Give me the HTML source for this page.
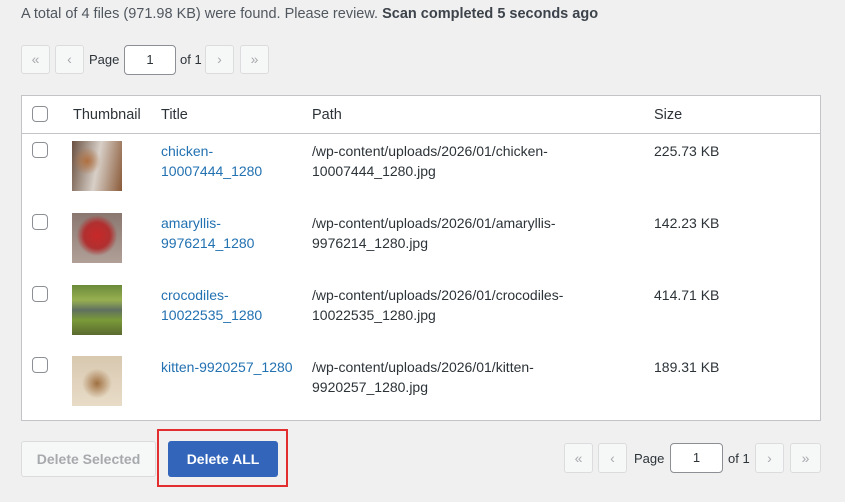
<!DOCTYPE html>
<html><head><style>
*{box-sizing:border-box;margin:0;padding:0}
body{width:845px;height:502px;background:#f0f0f1;font-family:"Liberation Sans",sans-serif;font-size:13px;color:#3c434a;position:relative;overflow:hidden}
.a{position:absolute}
.pb{position:absolute;width:29px;height:29px;border:1px solid #dcdcde;border-radius:3px;background:#f6f7f7;color:#a7aaad;text-align:center;line-height:26px;font-size:14px}
.inp{position:absolute;height:30px;border:1px solid #8c8f94;border-radius:4px;background:#fff;text-align:center;line-height:28px;font-size:13px;color:#2c3338}
.cb{position:absolute;left:32px;width:16px;height:16px;border:1px solid #8c8f94;border-radius:4px;background:#fff}
.th{position:absolute;left:72px;width:50px;height:50px}
.lk{color:#2271b1;line-height:20px;font-size:14px}
.tx{line-height:20px;color:#2c3338;font-size:14px}
</style></head><body>
<div class="a" style="left:21px;top:6px;color:#50575e;font-size:14.5px">A total of 4 files (971.98 KB) were found. Please review. <b style="color:#3c434a">Scan completed 5 seconds ago</b></div>
<div class="pb" style="left:21px;top:45px">«</div>
<div class="pb" style="left:55px;top:45px">‹</div>
<div class="a" style="left:89px;top:52px;color:#2c3338">Page</div>
<div class="inp" style="left:124px;top:45px;width:52px">1</div>
<div class="a" style="left:180px;top:52px;color:#2c3338">of 1</div>
<div class="pb" style="left:205px;top:45px">›</div>
<div class="pb" style="left:240px;top:45px">»</div>

<div class="a" style="left:21px;top:95px;width:800px;height:326px;background:#fff;border:1px solid #c3c4c7"></div>
<div class="a" style="left:22px;top:133px;width:798px;height:1px;background:#c3c4c7"></div>
<div class="cb" style="top:106px"></div>
<div class="a tx" style="left:73px;top:105px;font-size:14.5px">Thumbnail</div>
<div class="a tx" style="left:161px;top:105px;font-size:14.5px">Title</div>
<div class="a tx" style="left:312px;top:105px;font-size:14.5px">Path</div>
<div class="a tx" style="left:654px;top:105px;font-size:14.5px">Size</div>

<div class="cb" style="top:142px"></div>
<div class="th" style="top:141px;background:radial-gradient(circle at 30% 40%,#b07040 0,transparent 30%),linear-gradient(100deg,#6a5040,#d8d0c8 50%,#8a5a38)"></div>
<div class="a lk" style="left:161px;top:141px">chicken-<br>10007444_1280</div>
<div class="a tx" style="left:312px;top:141px">/wp-content/uploads/2026/01/chicken-<br>10007444_1280.jpg</div>
<div class="a tx" style="left:654px;top:141px">225.73 KB</div>

<div class="cb" style="top:214px"></div>
<div class="th" style="top:213px;background:radial-gradient(circle at 50% 45%,#c82828 0,#b03030 35%,transparent 55%),linear-gradient(#8a7870,#b0a098)"></div>
<div class="a lk" style="left:161px;top:213px">amaryllis-<br>9976214_1280</div>
<div class="a tx" style="left:312px;top:213px">/wp-content/uploads/2026/01/amaryllis-<br>9976214_1280.jpg</div>
<div class="a tx" style="left:654px;top:213px">142.23 KB</div>

<div class="cb" style="top:286px"></div>
<div class="th" style="top:285px;background:linear-gradient(#6a8a3a,#98b050 30%,#607060 50%,#7a9a38 70%,#5a6a30)"></div>
<div class="a lk" style="left:161px;top:285px">crocodiles-<br>10022535_1280</div>
<div class="a tx" style="left:312px;top:285px">/wp-content/uploads/2026/01/crocodiles-<br>10022535_1280.jpg</div>
<div class="a tx" style="left:654px;top:285px">414.71 KB</div>

<div class="cb" style="top:357px"></div>
<div class="th" style="top:356px;background:radial-gradient(circle at 50% 55%,#a07040 0,transparent 40%),linear-gradient(#d8c8b0,#e8dcc8)"></div>
<div class="a lk" style="left:161px;top:357px">kitten-9920257_1280</div>
<div class="a tx" style="left:312px;top:357px">/wp-content/uploads/2026/01/kitten-<br>9920257_1280.jpg</div>
<div class="a tx" style="left:654px;top:357px">189.31 KB</div>

<div class="a" style="left:21px;top:441px;width:135px;height:36px;border:1px solid #dcdcde;border-radius:3px;background:#f6f7f7;color:#a7aaad;font-weight:bold;font-size:14px;text-align:center;line-height:34px">Delete Selected</div>
<div class="a" style="left:157px;top:429px;width:131px;height:58px;border:2px solid #e22e2e"></div>
<div class="a" style="left:168px;top:441px;width:110px;height:36px;border-radius:3px;background:#3366bb;color:#fff;font-weight:bold;font-size:14px;text-align:center;line-height:36px">Delete ALL</div>

<div class="pb" style="left:564px;top:443px;height:30px;line-height:28px">«</div>
<div class="pb" style="left:598px;top:443px;height:30px;line-height:28px">‹</div>
<div class="a" style="left:634px;top:451px;color:#2c3338">Page</div>
<div class="inp" style="left:670px;top:443px;width:53px">1</div>
<div class="a" style="left:728px;top:451px;color:#2c3338">of 1</div>
<div class="pb" style="left:755px;top:443px;height:30px;line-height:28px">›</div>
<div class="pb" style="left:790px;top:443px;height:30px;line-height:28px;width:31px">»</div>
</body></html>
